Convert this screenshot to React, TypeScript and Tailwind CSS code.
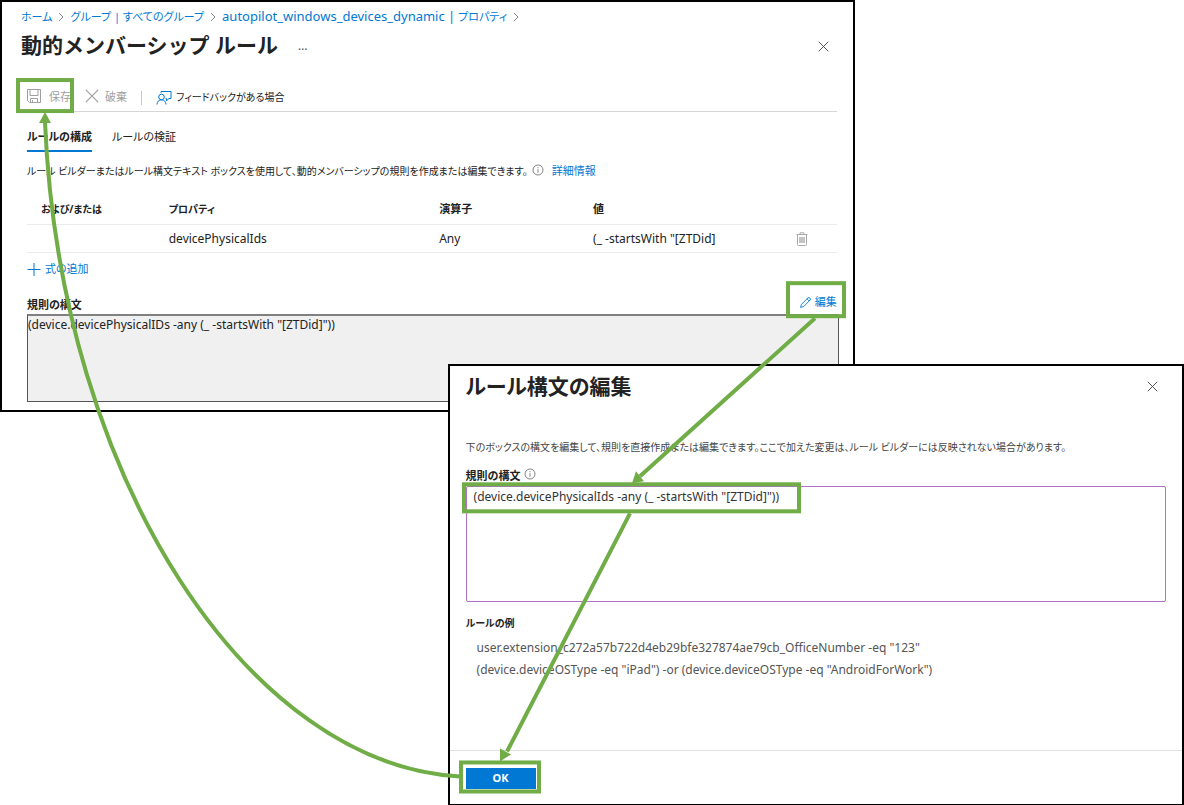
const rule = '(device.devicePhysicalIDs -any (_ -startsWith "[ZTDid]"))';

function CloseIcon({ className }: { className: string }) {
  return (
    <svg className={className} viewBox="0 0 12 12" fill="none" stroke="currentColor" aria-hidden="true">
      <path d="M0.8 0.8 11.2 11.2M11.2 0.8 0.8 11.2" />
    </svg>
  );
}

function InfoIcon() {
  return (
    <svg className="size-3 text-[#666]" viewBox="0 0 12 12" fill="none" stroke="currentColor" aria-hidden="true">
      <circle cx="6" cy="6" r="5" strokeWidth="0.8" />
      <path d="M6 5.2V8.8M6 3.2V4.2" strokeWidth="0.8" />
    </svg>
  );
}

function Chevron() {
  return (
    <svg className="mx-[5px] size-2 text-[#888]" viewBox="0 0 8 8" fill="none" stroke="currentColor" aria-hidden="true">
      <path d="M2 0 6 4 2 8" />
    </svg>
  );
}

function SaveIcon() {
  return (
    <svg className="size-[14px]" viewBox="0 0 14 14" fill="none" stroke="currentColor" aria-hidden="true">
      <path d="M0.5 0.5H13.5V13.5H2.5L0.5 11.5ZM3 0.5V6.5H11V0.5M3.5 13.5V9.5H10.5V13.5M5.5 11V13.5" />
    </svg>
  );
}

function FeedbackIcon() {
  return (
    <svg className="size-4 text-[#0078d4]" viewBox="0 0 16 16" fill="none" stroke="currentColor" aria-hidden="true">
      <circle cx="5.5" cy="7" r="2.8" />
      <path d="M1 14.5C1 11.8 3 9.8 5.5 9.8S10 11.8 10 14.5M5 2.8V1.5H15V8.5H13L10.5 10.8V8.5H9.5" />
    </svg>
  );
}

function TrashIcon() {
  return (
    <svg className="h-[14px] w-3 text-[#aaa]" viewBox="0 0 12 14" fill="none" stroke="currentColor" aria-hidden="true">
      <path d="M0.5 2.5H11.5M4 2.5V0.8H8V2.5M1.5 2.5V12.5Q1.5 13.5 2.5 13.5H9.5Q10.5 13.5 10.5 12.5V2.5" />
      <path d="M4 5V11M6 5V11M8 5V11" strokeWidth="1.4" />
    </svg>
  );
}

function PencilIcon() {
  return (
    <svg className="size-[11px]" viewBox="0 0 11 11" fill="none" stroke="currentColor" aria-hidden="true">
      <path d="M0.6 10.4 1.4 7.4 8 0.8Q9 0.2 9.9 1.1T10.2 3L3.6 9.6ZM7 1.8 9.2 4" strokeWidth="0.9" />
    </svg>
  );
}

function RulesPanel() {
  return (
    <section className="w-[72.2%] border-2 border-black bg-white pb-2">
      <nav className="flex h-[30px] items-center pl-[19px] text-[#0078d4]" aria-label="breadcrumb">
        <a href="#home">ホーム</a>
        <Chevron />
        <a href="#groups">グループ | すべてのグループ</a>
        <Chevron />
        <a href="#properties">
          <span className="text-[13px]">autopilot_windows_devices_dynamic |</span> プロパティ
        </a>
        <Chevron />
      </nav>
      <header className="flex h-7 items-center pr-6 pl-[19px]">
        <h1 className="text-[21px] font-bold [font-feature-settings:normal]">動的メンバーシップ ルール</h1>
        <button type="button" className="ml-5 text-[12px] text-[#555]">…</button>
        <button type="button" aria-label="閉じる" className="ml-auto text-[#444]">
          <CloseIcon className="size-[11px]" />
        </button>
      </header>

      <div className="mr-4 ml-[25px]">
        <div className="mt-5 flex h-8 items-center border-b border-[#d6d6d6] pt-1">
          <button type="button" className="flex items-start gap-2 text-[#a0a0a0]">
            <SaveIcon />
            保存
          </button>
          <button type="button" className="ml-[14px] flex items-start gap-[6px] text-[#a0a0a0]">
            <CloseIcon className="size-[14px]" />
            破棄
          </button>
          <span className="mx-[14px] h-[14px] w-px bg-[#c8c8c8]" />
          <button type="button" className="flex items-start gap-1 text-[10px]">
            <FeedbackIcon />
            フィードバックがある場合
          </button>
        </div>

        <div className="mt-[10px] flex h-[30px] gap-5" role="tablist">
          <button type="button" role="tab" aria-selected="true" className="border-b-2 border-[#0078d4] pt-[2px] font-bold">
            ルールの構成
          </button>
          <button type="button" role="tab" aria-selected="false" className="border-b-2 border-transparent pt-[2px]">
            ルールの検証
          </button>
        </div>

        <div className="mt-2 flex h-[22px] items-center gap-2">
          <p className="flex gap-1 text-[10px]">
            ルール ビルダーまたはルール構文テキスト ボックスを使用して、動的メンバーシップの規則を作成または編集できます。
            <InfoIcon />
          </p>
          <a href="#more" className="text-[#0078d4]">詳細情報</a>
        </div>

        <table className="mt-[11px] w-full table-fixed text-left">
          <thead>
            <tr className="h-[31px] border-b border-[#ebebeb]">
              <th className="w-[17.5%] pt-[2px] pl-[14px] text-[10px]">および/または</th>
              <th className="w-[33.4%] pt-[2px] text-[10px]">プロパティ</th>
              <th className="w-[19%] pt-[2px]">演算子</th>
              <th className="w-[25.1%] pt-[2px]">値</th>
              <th aria-label="削除" />
            </tr>
          </thead>
          <tbody className="text-[12px]">
            <tr className="h-7 border-b border-[#ebebeb]">
              <td />
              <td className="pt-[2px]">devicePhysicalIds</td>
              <td className="pt-[2px]">Any</td>
              <td className="pt-[2px]">(_ -startsWith "[ZTDid]</td>
              <td className="pt-[2px]">
                <button type="button" aria-label="削除" className="flex">
                  <TrashIcon />
                </button>
              </td>
            </tr>
          </tbody>
        </table>

        <button type="button" className="mt-[6px] flex h-[22px] items-center gap-1 text-[#0078d4]">
          <svg className="size-[14px]" viewBox="0 0 14 14" stroke="currentColor" aria-hidden="true">
            <path d="M0.5 6.5H13.5M7 0V13" />
          </svg>
          式の追加
        </button>

        <div className="mt-[11px] flex h-[22px] items-center justify-between">
          <label htmlFor="rule" className="self-end font-bold">規則の構文</label>
          <button type="button" className="flex items-center gap-1 text-[#0078d4]">
            <PencilIcon />
            編集
          </button>
        </div>
      </div>
      <div className="mr-[14px] ml-[25px]">
        <textarea
          id="rule"
          readOnly
          value={rule}
          className="block h-[88px] w-full resize-none border border-t-2 border-[#555] border-t-[#808080] bg-[#f0f0f0] text-[12px] leading-[18px]"
        />
      </div>
    </section>
  );
}

function EditPanel() {
  return (
    <section className="relative -mt-12 ml-auto w-[62.2%] border-2 border-black bg-white">
      <div className="px-4">
        <header className="flex h-[42px] items-center pr-2">
          <h2 className="text-[21px] font-bold">ルール構文の編集</h2>
          <button type="button" aria-label="閉じる" className="ml-auto text-[#444]">
            <CloseIcon className="size-[11px]" />
          </button>
        </header>
        <p className="mt-7 h-[22px] text-[10px] leading-[22px] text-[#444]">
          下のボックスの構文を編集して、規則を直接作成または編集できます。ここで加えた変更は、ルール ビルダーには反映されない場合があります。
        </p>
        <div className="mt-[10px] flex h-[18px] items-start gap-1">
          <label htmlFor="edit-rule" className="font-bold">規則の構文</label>
          <InfoIcon />
        </div>
        <textarea
          id="edit-rule"
          defaultValue={'(device.devicePhysicalIds -any (_ -startsWith "[ZTDid]"))'}
          className="block h-[116px] w-full resize-none rounded-[2px] border border-[#b070c4] px-[7px] text-[12px] leading-5 text-[#333]"
        />
        <h3 className="mt-[11px] h-5 text-[10px] font-bold leading-5">ルールの例</h3>
        <div className="mt-1 pl-[11px] text-[12px] leading-[22px] text-[#555]">
          <p>user.extension_c272a57b722d4eb29bfe327874ae79cb_OfficeNumber -eq "123"</p>
          <p>(device.deviceOSType -eq "iPad") -or (device.deviceOSType -eq "AndroidForWork")</p>
        </div>
      </div>
      <footer className="mt-[69px] border-t border-[#e1e1e1] px-4 pt-[17px] pb-[15px]">
        <button type="button" className="block h-[21px] w-[70px] bg-[#0078d4] font-bold text-white">OK</button>
      </footer>
    </section>
  );
}

function Annotations() {
  return (
    <svg
      className="pointer-events-none absolute inset-0 size-full"
      viewBox="0 0 1184 805"
      preserveAspectRatio="none"
      fill="none"
      stroke="#70ad47"
      strokeWidth="4"
      aria-hidden="true"
    >
      <rect x="18" y="80" width="54" height="31" />
      <rect x="788" y="283" width="56" height="33" />
      <rect x="464" y="484" width="335" height="27" />
      <rect x="461" y="762" width="78" height="29" />
      <path d="M815 318 640 476M630 513 507 751M460 776C250 765 60 480 45 122" />
      <g fill="#70ad47" stroke="none">
        <path d="M632 483 636 471 644 481Z" />
        <path d="M500 761 500 748 511 754Z" />
        <path d="M45 112 39 123H51Z" />
      </g>
    </svg>
  );
}

export default function App() {
  return (
    <main
      lang="ja"
      className="relative bg-white font-['Noto_Sans','Noto_Sans_CJK_JP',sans-serif] text-[11px] text-[#222] [font-feature-settings:'palt']"
    >
      <RulesPanel />
      <EditPanel />
      <Annotations />
    </main>
  );
}
